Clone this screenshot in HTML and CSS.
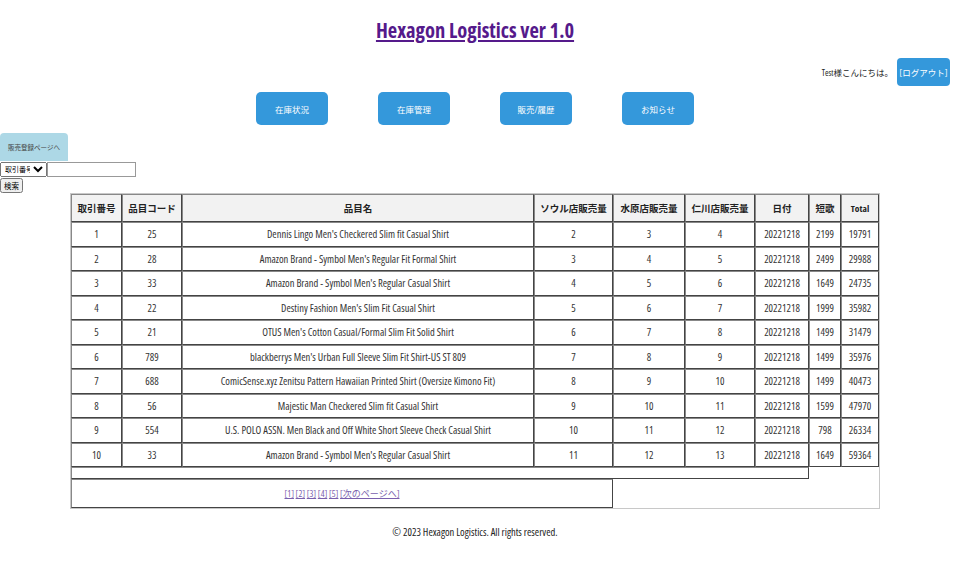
FILE: index.html
```html
<!DOCTYPE html>
<html lang="ja">
<head>
<meta charset="utf-8">
<title>Hexagon Logistics</title>
<link rel="stylesheet" href="styles.css">
</head>
<body>
<header class="site-header">
  <h1 class="title"><a href="#" class="title-link">Hexagon Logistics ver 1.0</a></h1>
  <div class="user-bar">
    <span class="greeting">Test様こんにちは。</span>
    <button class="logout">[ログアウト]</button>
  </div>
  <nav class="nav">
    <button class="nav-btn">在庫状況</button>
    <button class="nav-btn">在庫管理</button>
    <button class="nav-btn">販売/履歴</button>
    <button class="nav-btn">お知らせ</button>
  </nav>
</header>
<aside class="side">
  <button class="reg-btn">販売登録ページへ</button>
  <form class="search">
    <div class="search-line">
      <select class="search-select"><option>取引番号</option></select><input class="search-input" type="text">
    </div>
    <button class="search-btn" type="button">検索</button>
  </form>
</aside>
<main class="main">
  <table class="data">
    <colgroup>
      <col class="c1"><col class="c2"><col class="c3"><col class="c4"><col class="c5"><col class="c6"><col class="c7"><col class="c8"><col class="c9">
    </colgroup>
    <thead>
      <tr><th>取引番号</th><th>品目コード</th><th>品目名</th><th>ソウル店販売量</th><th>水原店販売量</th><th>仁川店販売量</th><th>日付</th><th>短歌</th><th>Total</th></tr>
    </thead>
    <tbody>
      <tr><td>1</td><td>25</td><td>Dennis Lingo Men's Checkered Slim fit Casual Shirt</td><td>2</td><td>3</td><td>4</td><td>20221218</td><td>2199</td><td>19791</td></tr>
      <tr><td>2</td><td>28</td><td>Amazon Brand - Symbol Men's Regular Fit Formal Shirt</td><td>3</td><td>4</td><td>5</td><td>20221218</td><td>2499</td><td>29988</td></tr>
      <tr><td>3</td><td>33</td><td>Amazon Brand - Symbol Men's Regular Casual Shirt</td><td>4</td><td>5</td><td>6</td><td>20221218</td><td>1649</td><td>24735</td></tr>
      <tr><td>4</td><td>22</td><td>Destiny Fashion Men's Slim Fit Casual Shirt</td><td>5</td><td>6</td><td>7</td><td>20221218</td><td>1999</td><td>35982</td></tr>
      <tr><td>5</td><td>21</td><td>OTUS Men's Cotton Casual/Formal Slim Fit Solid Shirt</td><td>6</td><td>7</td><td>8</td><td>20221218</td><td>1499</td><td>31479</td></tr>
      <tr><td>6</td><td>789</td><td>blackberrys Men's Urban Full Sleeve Slim Fit Shirt-US ST 809</td><td>7</td><td>8</td><td>9</td><td>20221218</td><td>1499</td><td>35976</td></tr>
      <tr><td>7</td><td>688</td><td>ComicSense.xyz Zenitsu Pattern Hawaiian Printed Shirt (Oversize Kimono Fit)</td><td>8</td><td>9</td><td>10</td><td>20221218</td><td>1499</td><td>40473</td></tr>
      <tr><td>8</td><td>56</td><td>Majestic Man Checkered Slim fit Casual Shirt</td><td>9</td><td>10</td><td>11</td><td>20221218</td><td>1599</td><td>47970</td></tr>
      <tr><td>9</td><td>554</td><td>U.S. POLO ASSN. Men Black and Off White Short Sleeve Check Casual Shirt</td><td>10</td><td>11</td><td>12</td><td>20221218</td><td>798</td><td>26334</td></tr>
      <tr><td>10</td><td>33</td><td>Amazon Brand - Symbol Men's Regular Casual Shirt</td><td>11</td><td>12</td><td>13</td><td>20221218</td><td>1649</td><td>59364</td></tr>
      <tr class="spacer"><td colspan="7"></td></tr>
      <tr class="pager-row"><td colspan="4" class="pager">
        <a href="#">[1]</a> <a href="#">[2]</a> <a href="#">[3]</a> <a href="#">[4]</a> <a href="#">[5]</a> <a href="#">[次のページへ]</a>
      </td></tr>
    </tbody>
  </table>
</main>
<footer class="footer">© 2023 Hexagon Logistics. All rights reserved.</footer>
</body>
</html>
```

FILE: styles.css
```css
html, body {
  margin: 0;
  padding: 0;
  background: #fff;
}
body {
  padding-right: 8px;
  font-family: "Open Sans", "Noto Sans CJK JP", sans-serif;
  font-stretch: 75%;
  color: #333;
  font-size: 10.5px;
}
button, select, input {
  font-family: inherit;
  font-stretch: inherit;
}
.site-header {
  display: flex;
  flex-direction: column;
}
.title {
  margin: 16px 0 0;
  text-align: center;
  font-size: 20.5px;
  font-weight: bold;
  line-height: 28px;
}
.title-link {
  color: #551a8b;
}
.user-bar {
  display: flex;
  justify-content: flex-end;
  align-items: center;
  gap: 4px;
  margin-top: 14px;
}
.greeting {
  font-size: 8.5px;
  color: #222;
}
.logout {
  background: #3498db;
  color: #fff;
  border: none;
  border-radius: 4px;
  width: 53px;
  height: 28px;
  padding: 0;
  font-size: 8.5px;
}
.nav {
  display: flex;
  justify-content: center;
  gap: 50px;
  margin-top: 6px;
}
.nav-btn {
  width: 72px;
  height: 33px;
  background: #3498db;
  color: #fff;
  border: none;
  border-radius: 5px;
  font-size: 8.5px;
}
.side {
  display: flex;
  flex-direction: column;
  align-items: flex-start;
  margin-top: 8px;
}
.reg-btn {
  width: 68px;
  height: 28px;
  background: #add8e6;
  color: #444;
  border: none;
  border-radius: 4px 4px 0 0;
  font-size: 6.5px;
  padding: 0;
}
.search {
  margin: 1px 0 0;
}
.search-line {
  display: flex;
  align-items: center;
}
.search-select {
  width: 47px;
  height: 15px;
  font-size: 7px;
  padding: 0;
  margin: 0;
}
.search-input {
  width: 85px;
  height: 11px;
  font-size: 8px;
  margin: 0;
  padding: 1px;
  border: 1px solid #999;
}
.search-btn {
  margin-top: 1px;
  height: 15px;
  padding: 0 2px;
  font-size: 7.5px;
}
.main {
  display: flex;
  justify-content: center;
  margin-top: 0;
}
.data {
  width: 808px;
  border-collapse: separate;
  border-spacing: 0;
  border: 1px solid #c8c8c8;
  table-layout: fixed;
}
.c1 { width: 51px; }
.c2 { width: 60px; }
.c3 { width: 352px; }
.c4 { width: 79px; }
.c5 { width: 72px; }
.c6 { width: 70px; }
.c7 { width: 54px; }
.c8 { width: 32px; }
.c9 { width: 38px; }
.data th,
.data td {
  border: 1px solid;
  border-color: #888 #444 #444 #888;
  text-align: center;
  padding: 0;
  white-space: nowrap;
}
.data th {
  height: 26px;
  background: #f2f2f2;
  font-weight: bold;
  font-size: 9.5px;
  color: #222;
}
.data td {
  height: 22.5px;
}
.spacer td {
  height: 10px;
}
.pager-row td {
  height: 27px;
}
.pager {
  font-size: 9px;
}
.pager a {
  color: #7a5fae;
}
.footer {
  text-align: center;
  margin-top: 16px;
  color: #222;
}
```
